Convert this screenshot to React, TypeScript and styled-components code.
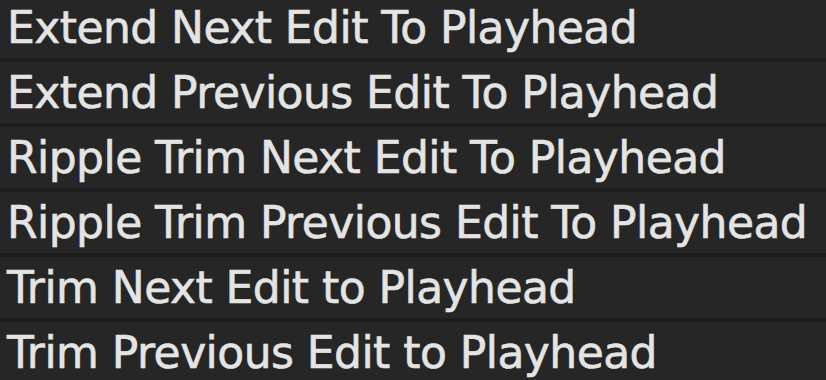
import React from "react";
import styled, { createGlobalStyle } from "styled-components";

const Global = createGlobalStyle`
  html, body { margin: 0; padding: 0; background: #262626; }
  body { width: 826px; height: 380px; overflow: hidden; }
`;

const List = styled.ul`
  list-style: none;
  margin: -3px 0 0 0;
  padding: 0;
  display: flex;
  flex-direction: column;
  width: 826px;
  background: #262626;
`;

const Row = styled.li`
  height: 60px;
  border-bottom: 4px solid #1d1d1d;
  display: flex;
  align-items: center;
  padding-left: 7px;
  padding-bottom: 1px;
  box-sizing: content-box;
  font-family: "DejaVu Sans", sans-serif;
  font-size: 44px;
  letter-spacing: -0.55px;
  color: #e4e4e4;
  -webkit-text-stroke: 0.6px #e4e4e4;
  white-space: nowrap;
`;

const items = [
  "Extend Next Edit To Playhead",
  "Extend Previous Edit To Playhead",
  "Ripple Trim Next Edit To Playhead",
  "Ripple Trim Previous Edit To Playhead",
  "Trim Next Edit to Playhead",
  "Trim Previous Edit to Playhead",
];

export default function App() {
  return (
    <>
      <Global />
      <List>
        {items.map((t) => (
          <Row key={t}>{t}</Row>
        ))}
      </List>
    </>
  );
}
